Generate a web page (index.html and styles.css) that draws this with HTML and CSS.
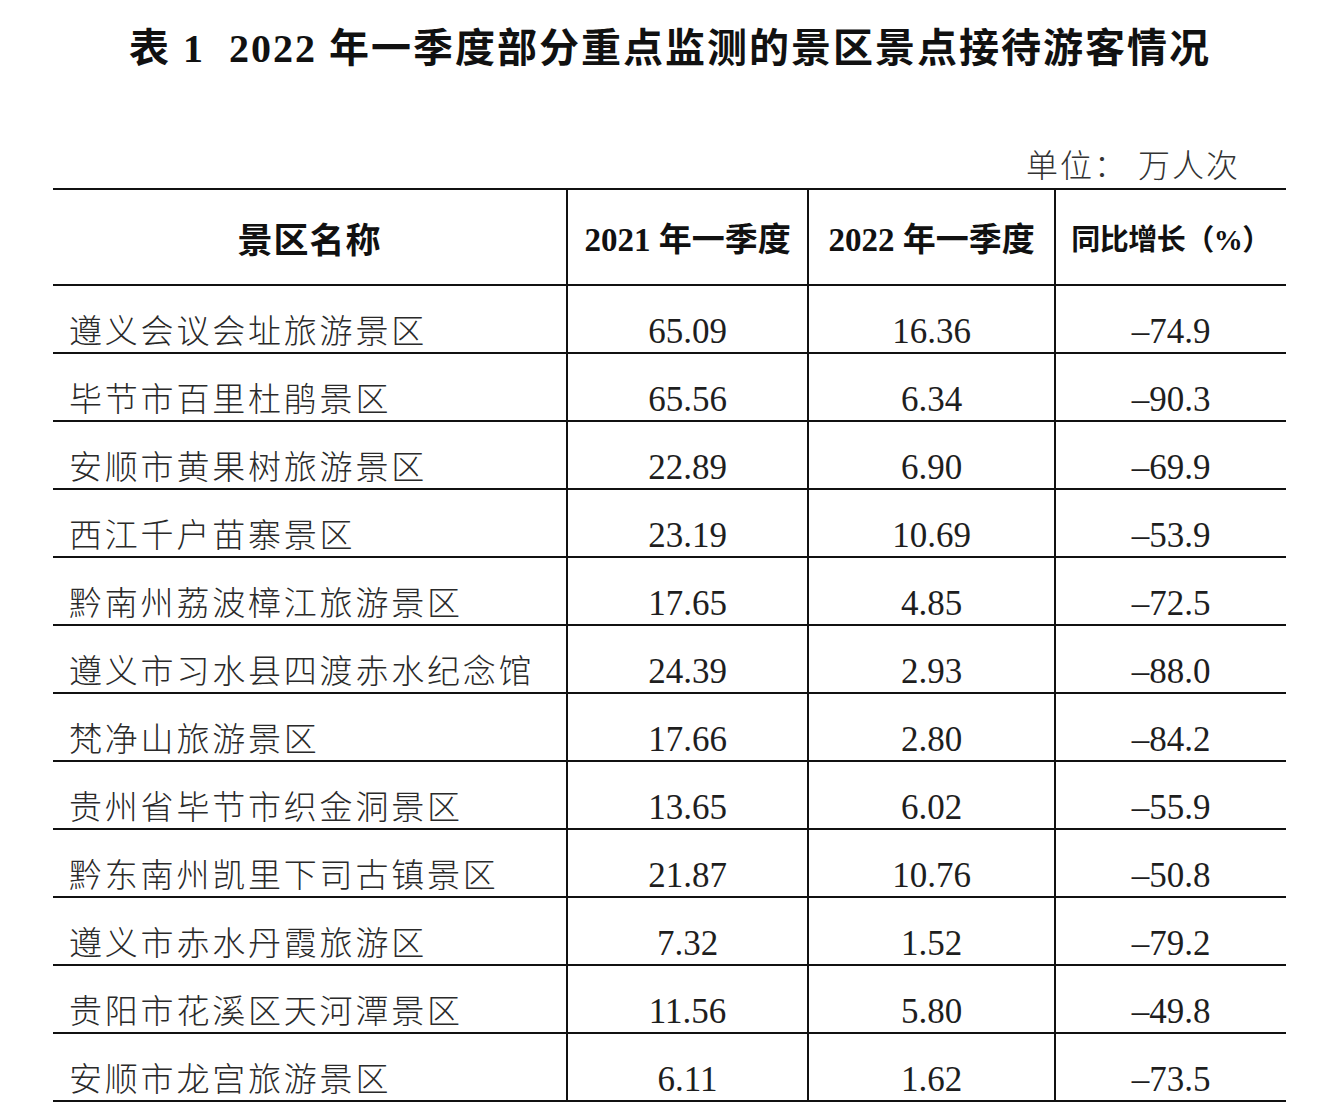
FILE: index.html
```html
<!DOCTYPE html>
<html lang="zh-CN">
<head>
<meta charset="utf-8">
<title>表1 2022年一季度部分重点监测的景区景点接待游客情况</title>
<link rel="stylesheet" href="styles.css">
</head>
<body>
<div class="page">
  <h1 class="title">表 1&nbsp;&nbsp;2022 年一季度部分重点监测的景区景点接待游客情况</h1>
  <div class="unit">单位：&nbsp;万人次</div>
  <table class="data">
    <colgroup>
      <col class="c1"><col class="c2"><col class="c3"><col class="c4">
    </colgroup>
    <thead>
      <tr>
        <th class="h1">景区名称</th>
        <th class="h2">2021 年一季度</th>
        <th class="h2">2022 年一季度</th>
        <th class="h4">同比增长（%）</th>
      </tr>
    </thead>
    <tbody>
      <tr><td class="name">遵义会议会址旅游景区</td><td>65.09</td><td>16.36</td><td>–74.9</td></tr>
      <tr><td class="name">毕节市百里杜鹃景区</td><td>65.56</td><td>6.34</td><td>–90.3</td></tr>
      <tr><td class="name">安顺市黄果树旅游景区</td><td>22.89</td><td>6.90</td><td>–69.9</td></tr>
      <tr><td class="name">西江千户苗寨景区</td><td>23.19</td><td>10.69</td><td>–53.9</td></tr>
      <tr><td class="name">黔南州荔波樟江旅游景区</td><td>17.65</td><td>4.85</td><td>–72.5</td></tr>
      <tr><td class="name">遵义市习水县四渡赤水纪念馆</td><td>24.39</td><td>2.93</td><td>–88.0</td></tr>
      <tr><td class="name">梵净山旅游景区</td><td>17.66</td><td>2.80</td><td>–84.2</td></tr>
      <tr><td class="name">贵州省毕节市织金洞景区</td><td>13.65</td><td>6.02</td><td>–55.9</td></tr>
      <tr><td class="name">黔东南州凯里下司古镇景区</td><td>21.87</td><td>10.76</td><td>–50.8</td></tr>
      <tr><td class="name">遵义市赤水丹霞旅游区</td><td>7.32</td><td>1.52</td><td>–79.2</td></tr>
      <tr><td class="name">贵阳市花溪区天河潭景区</td><td>11.56</td><td>5.80</td><td>–49.8</td></tr>
      <tr><td class="name">安顺市龙宫旅游景区</td><td>6.11</td><td>1.62</td><td>–73.5</td></tr>
    </tbody>
  </table>
</div>
</body>
</html>
```

FILE: styles.css
```css
html, body {
  margin: 0;
  padding: 0;
  background: #ffffff;
}

.page {
  width: 1340px;
  height: 1110px;
  overflow: hidden;
  color: #1c1c1c;
}

.title {
  margin: 0;
  padding-top: 24px;
  height: 50px;
  line-height: 50px;
  text-align: center;
  font-family: "Liberation Serif", "Noto Sans CJK SC", serif;
  font-weight: 700;
  font-size: 40px;
  letter-spacing: 2px;
  color: #111;
}

.unit {
  margin-top: 72px;
  height: 40px;
  line-height: 40px;
  text-align: right;
  padding-right: 100px;
  font-family: "Liberation Serif", "Noto Sans CJK SC", serif;
  font-weight: 300;
  font-size: 32px;
  letter-spacing: 2px;
  color: #333;
}

.data {
  margin-left: 53px;
  margin-top: 2px;
  width: 1233px;
  border-collapse: collapse;
  table-layout: fixed;
}

.c1 { width: 514px; }
.c2 { width: 241px; }
.c3 { width: 247px; }
.c4 { width: 231px; }

.data th,
.data td {
  border-top: 2px solid #111;
  border-bottom: 2px solid #111;
  border-left: 2px solid #111;
  padding: 0;
  text-align: center;
  font-family: "Liberation Serif", "Noto Sans CJK SC", serif;
  color: #1e1e1e;
}

.data th:first-child,
.data td:first-child {
  border-left: none;
}

.data th {
  height: 94px;
  font-weight: 700;
  vertical-align: middle;
  color: #111;
  white-space: nowrap;
}

.data th.h1 {
  font-size: 35px;
  letter-spacing: 1px;
}

.data th.h2 {
  font-size: 33px;
}

.data th.h4 {
  font-size: 29px;
  letter-spacing: -0.5px;
}

.data td {
  height: 66px;
  vertical-align: bottom;
  padding-bottom: 0;
  line-height: 40px;
  font-size: 35px;
  font-weight: 400;
}

.data td.name {
  text-align: left;
  padding-left: 16px;
  font-weight: 300;
  font-size: 33px;
  letter-spacing: 2.8px;
  color: #2a2a2a;
}
```
